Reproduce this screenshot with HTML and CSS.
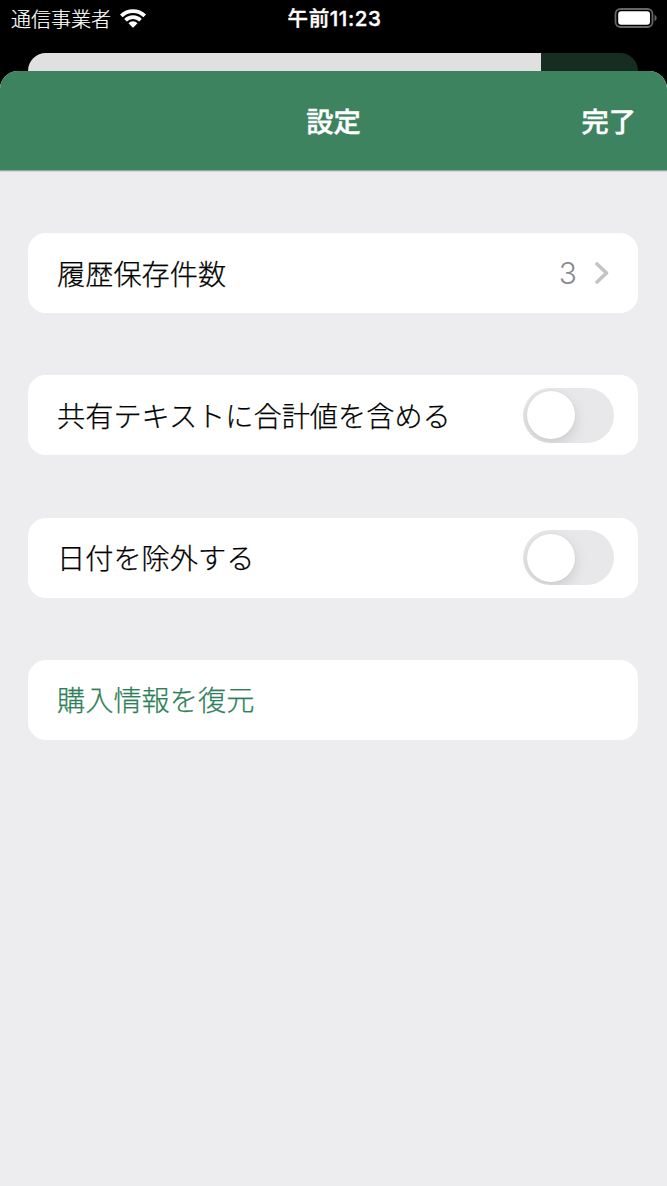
FILE: index.html
```html
<!DOCTYPE html>
<html lang="ja">
<head>
    <meta charset="UTF-8" />
    <meta name="viewport" content="width=device-width, initial-scale=1.0" />
    <title>設定</title>
    <link rel="stylesheet" href="styles.css">
</head>
<body>
    <div class="status-bar">
        <div class="carrier">
            <span>通信事業者</span>
            <svg class="wifi" width="26" height="20" viewBox="0 0 26 20">
                <path d="M0 5.6 A18.3 18.3 0 0 1 26 5.6 L23.4 8.3 A14.7 14.7 0 0 0 2.6 8.3 Z" />
                <path d="M4.2 9.9 A12.4 12.4 0 0 1 21.8 9.9 L19.2 12.6 A8.7 8.7 0 0 0 6.8 12.6 Z" />
                <path d="M8.5 14.2 A6.4 6.4 0 0 1 17.5 14.2 L13.6 18.2 Q13 18.8 12.4 18.2 Z" />
            </svg>
        </div>
        <time class="clock">午前11:23</time>
        <svg class="battery" width="44" height="22" viewBox="0 0 44 22">
            <rect class="battery-frame" x="1.5" y="1" width="37" height="18" rx="5" />
            <rect class="battery-level" x="4.2" y="3.2" width="31.8" height="13.6" rx="3" />
            <path class="battery-tip" d="M40.5 6.8 Q42.7 7.6 42.7 10 T40.5 13.2 Z" />
        </svg>
    </div>

    <div class="back-sheet"></div>

    <main class="sheet">
        <header class="nav">
            <h1>設定</h1>
            <button class="done">完了</button>
        </header>

        <div class="settings">
            <div class="row">
                <span class="label">履歴保存件数</span>
                <span class="value">3</span>
                <svg class="chevron" width="14" height="22" viewBox="0 0 14 22">
                    <path d="M2 2 L11.5 11 L2 20" />
                </svg>
            </div>
            <label class="row">
                <span class="label">共有テキストに合計値を含める</span>
                <span class="toggle"></span>
            </label>
            <label class="row">
                <span class="label">日付を除外する</span>
                <span class="toggle"></span>
            </label>
            <div class="row restore">
                <span class="label">購入情報を復元</span>
            </div>
        </div>
    </main>
</body>
</html>
```
FILE: styles.css
```css
* { box-sizing: border-box; }
body {
    font-family: Inter, "Noto Sans CJK JP", sans-serif;
    display: flex;
    flex-direction: column;
    height: 1186px;
    margin: 0;
    background: #000;
    overflow: hidden;
}

/* Status bar */
.status-bar {
    display: grid;
    grid-template-columns: 1fr auto 1fr;
    align-items: center;
    height: 37px;
    margin-bottom: 16px;
    padding: 0 9px 0 11px;
    color: #fff;
    font-size: 20px;
    line-height: 37px;
}
.carrier {
    display: flex;
    align-items: center;
    gap: 9px;
    font-weight: 300;
    -webkit-text-stroke: 0.2px currentColor;
}
.carrier span { padding-top: 2px; }
.wifi {
    margin-bottom: 1px;
    fill: #fff;
}
.clock {
    font-size: 20.5px;
    font-weight: 500;
    letter-spacing: 0.6px;
    padding-bottom: 2px;
    -webkit-text-stroke: 0.4px currentColor;
}
.battery {
    justify-self: end;
    margin-bottom: 1px;
}
.battery-frame {
    fill: none;
    stroke: #666;
    stroke-width: 1.8;
}
.battery-level { fill: #fff; }
.battery-tip { fill: #666; }

/* Screen behind the sheet */
.back-sheet {
    flex: none;
    height: 18px;
    margin: 0 29px 0 28px;
    border-radius: 18px 18px 0 0;
    background: linear-gradient(to right, #e0e0e0 513px, #182d22 513px);
}

/* Settings sheet */
.sheet {
    flex: 1;
    border-radius: 18px 18px 0 0;
    background: #ededef;
    overflow: hidden;
}
.nav {
    display: grid;
    grid-template-columns: 1fr auto 1fr;
    align-items: center;
    height: 100px;
    padding: 0 31px 2px;
    border-bottom: 1px solid #8aae9a;
    background: #3e835f;
    box-shadow: 0 1px 0 #d3d8d6;
    color: #fff;
    -webkit-text-stroke: 0.4px currentColor;
}
.nav h1 {
    grid-column: 2;
    margin: 0;
    font-size: 27.3px;
    font-weight: 500;
}
.done {
    justify-self: end;
    padding: 0;
    border: 0;
    background: none;
    color: inherit;
    font: inherit;
    font-size: 27.3px;
    font-weight: 500;
}
.settings {
    display: flex;
    flex-direction: column;
    gap: 62.2px;
    padding: 62.2px 29px 62.2px 28px;
}
.row {
    display: flex;
    align-items: center;
    height: 80px;
    padding: 0 24px 0 29px;
    border-radius: 18px;
    background: #fff;
    color: #000;
    font-size: 28.2px;
    font-weight: 300;
}
.label {
    padding-bottom: 2px;
    -webkit-text-stroke: 0.25px currentColor;
}
.value {
    margin-left: auto;
    color: #8a8a8e;
    font-size: 30px;
    font-weight: 350;
}
.chevron {
    margin: 0 5px 0 18px;
    fill: none;
    stroke: #c4c4c6;
    stroke-width: 3.6;
    stroke-linecap: round;
    stroke-linejoin: round;
}
.toggle {
    display: flex;
    width: 91px;
    height: 55px;
    margin-left: auto;
    padding: 3.5px;
    border-radius: 28px;
    background: #e8e8ea;
    overflow: hidden;
}
.toggle::before {
    content: "";
    width: 48px;
    height: 48px;
    border-radius: 50%;
    background: #fff;
    box-shadow: 0 5px 14px rgba(0, 0, 0, 0.13), 0 0 2px rgba(0, 0, 0, 0.06);
}
.restore { color: #2e8058; }
```
